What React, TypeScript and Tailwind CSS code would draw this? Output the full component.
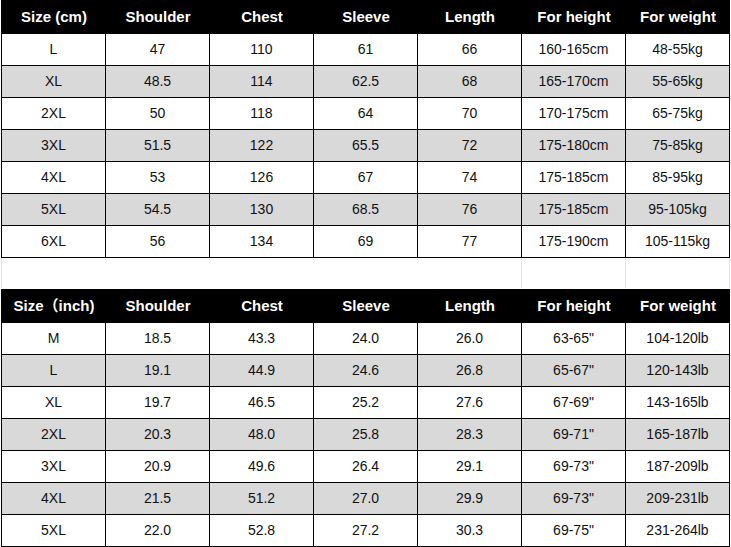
const cols = ["Shoulder", "Chest", "Sleeve", "Length", "For height", "For weight"];

const cmRows = [
  ["L", "47", "110", "61", "66", "160-165cm", "48-55kg"],
  ["XL", "48.5", "114", "62.5", "68", "165-170cm", "55-65kg"],
  ["2XL", "50", "118", "64", "70", "170-175cm", "65-75kg"],
  ["3XL", "51.5", "122", "65.5", "72", "175-180cm", "75-85kg"],
  ["4XL", "53", "126", "67", "74", "175-185cm", "85-95kg"],
  ["5XL", "54.5", "130", "68.5", "76", "175-185cm", "95-105kg"],
  ["6XL", "56", "134", "69", "77", "175-190cm", "105-115kg"],
];

const inchRows = [
  ["M", "18.5", "43.3", "24.0", "26.0", "63-65\"", "104-120lb"],
  ["L", "19.1", "44.9", "24.6", "26.8", "65-67\"", "120-143lb"],
  ["XL", "19.7", "46.5", "25.2", "27.6", "67-69\"", "143-165lb"],
  ["2XL", "20.3", "48.0", "25.8", "28.3", "69-71\"", "165-187lb"],
  ["3XL", "20.9", "49.6", "26.4", "29.1", "69-73\"", "187-209lb"],
  ["4XL", "21.5", "51.2", "27.0", "29.9", "69-73\"", "209-231lb"],
  ["5XL", "22.0", "52.8", "27.2", "30.3", "69-75\"", "231-264lb"],
];

function SizeTable({ first, rows, grayOdd }: { first: string; rows: string[][]; grayOdd: boolean }) {
  return (
    <div className="ml-[1px] border-l border-black w-[729px]">
      <div className="grid grid-cols-[repeat(7,104px)] h-[34px] bg-black">
        {[first, ...cols].map((h) => (
          <div key={h} className="flex items-center justify-center text-white font-bold text-[15px]">
            {h}
          </div>
        ))}
      </div>
      {rows.map((r, i) => {
        const gray = grayOdd ? i % 2 === 1 : i % 2 === 1;
        return (
          <div
            key={r[0]}
            className={`grid grid-cols-[repeat(7,104px)] h-[32px] ${gray ? "bg-[#d9d9d9]" : "bg-white"}`}
          >
            {r.map((c, j) => (
              <div
                key={j}
                className="flex items-center justify-center border-r border-b border-black text-[14px] text-[#111]"
              >
                {c}
              </div>
            ))}
          </div>
        );
      })}
    </div>
  );
}

export default function App() {
  return (
    <div className="w-[731px] h-[547px] bg-white overflow-hidden font-['Liberation_Sans','Noto_Sans_CJK_SC',Arial,sans-serif]">
      <SizeTable first="Size (cm)" rows={cmRows} grayOdd />
      {/* blank spacer row between the two charts */}
      <div className="ml-[1px] w-[729px] h-[30px] grid grid-cols-[repeat(7,104px)] border-l border-[#e2e2e2]">
        <div />
        <div />
        <div />
        <div />
        <div className="border-r border-[#e2e2e2]" />
        <div className="border-r border-[#e2e2e2]" />
        <div className="border-r border-[#e2e2e2]" />
      </div>
      <div className="h-[1px]" />
      <SizeTable first="Size（inch)" rows={inchRows} grayOdd />
    </div>
  );
}
